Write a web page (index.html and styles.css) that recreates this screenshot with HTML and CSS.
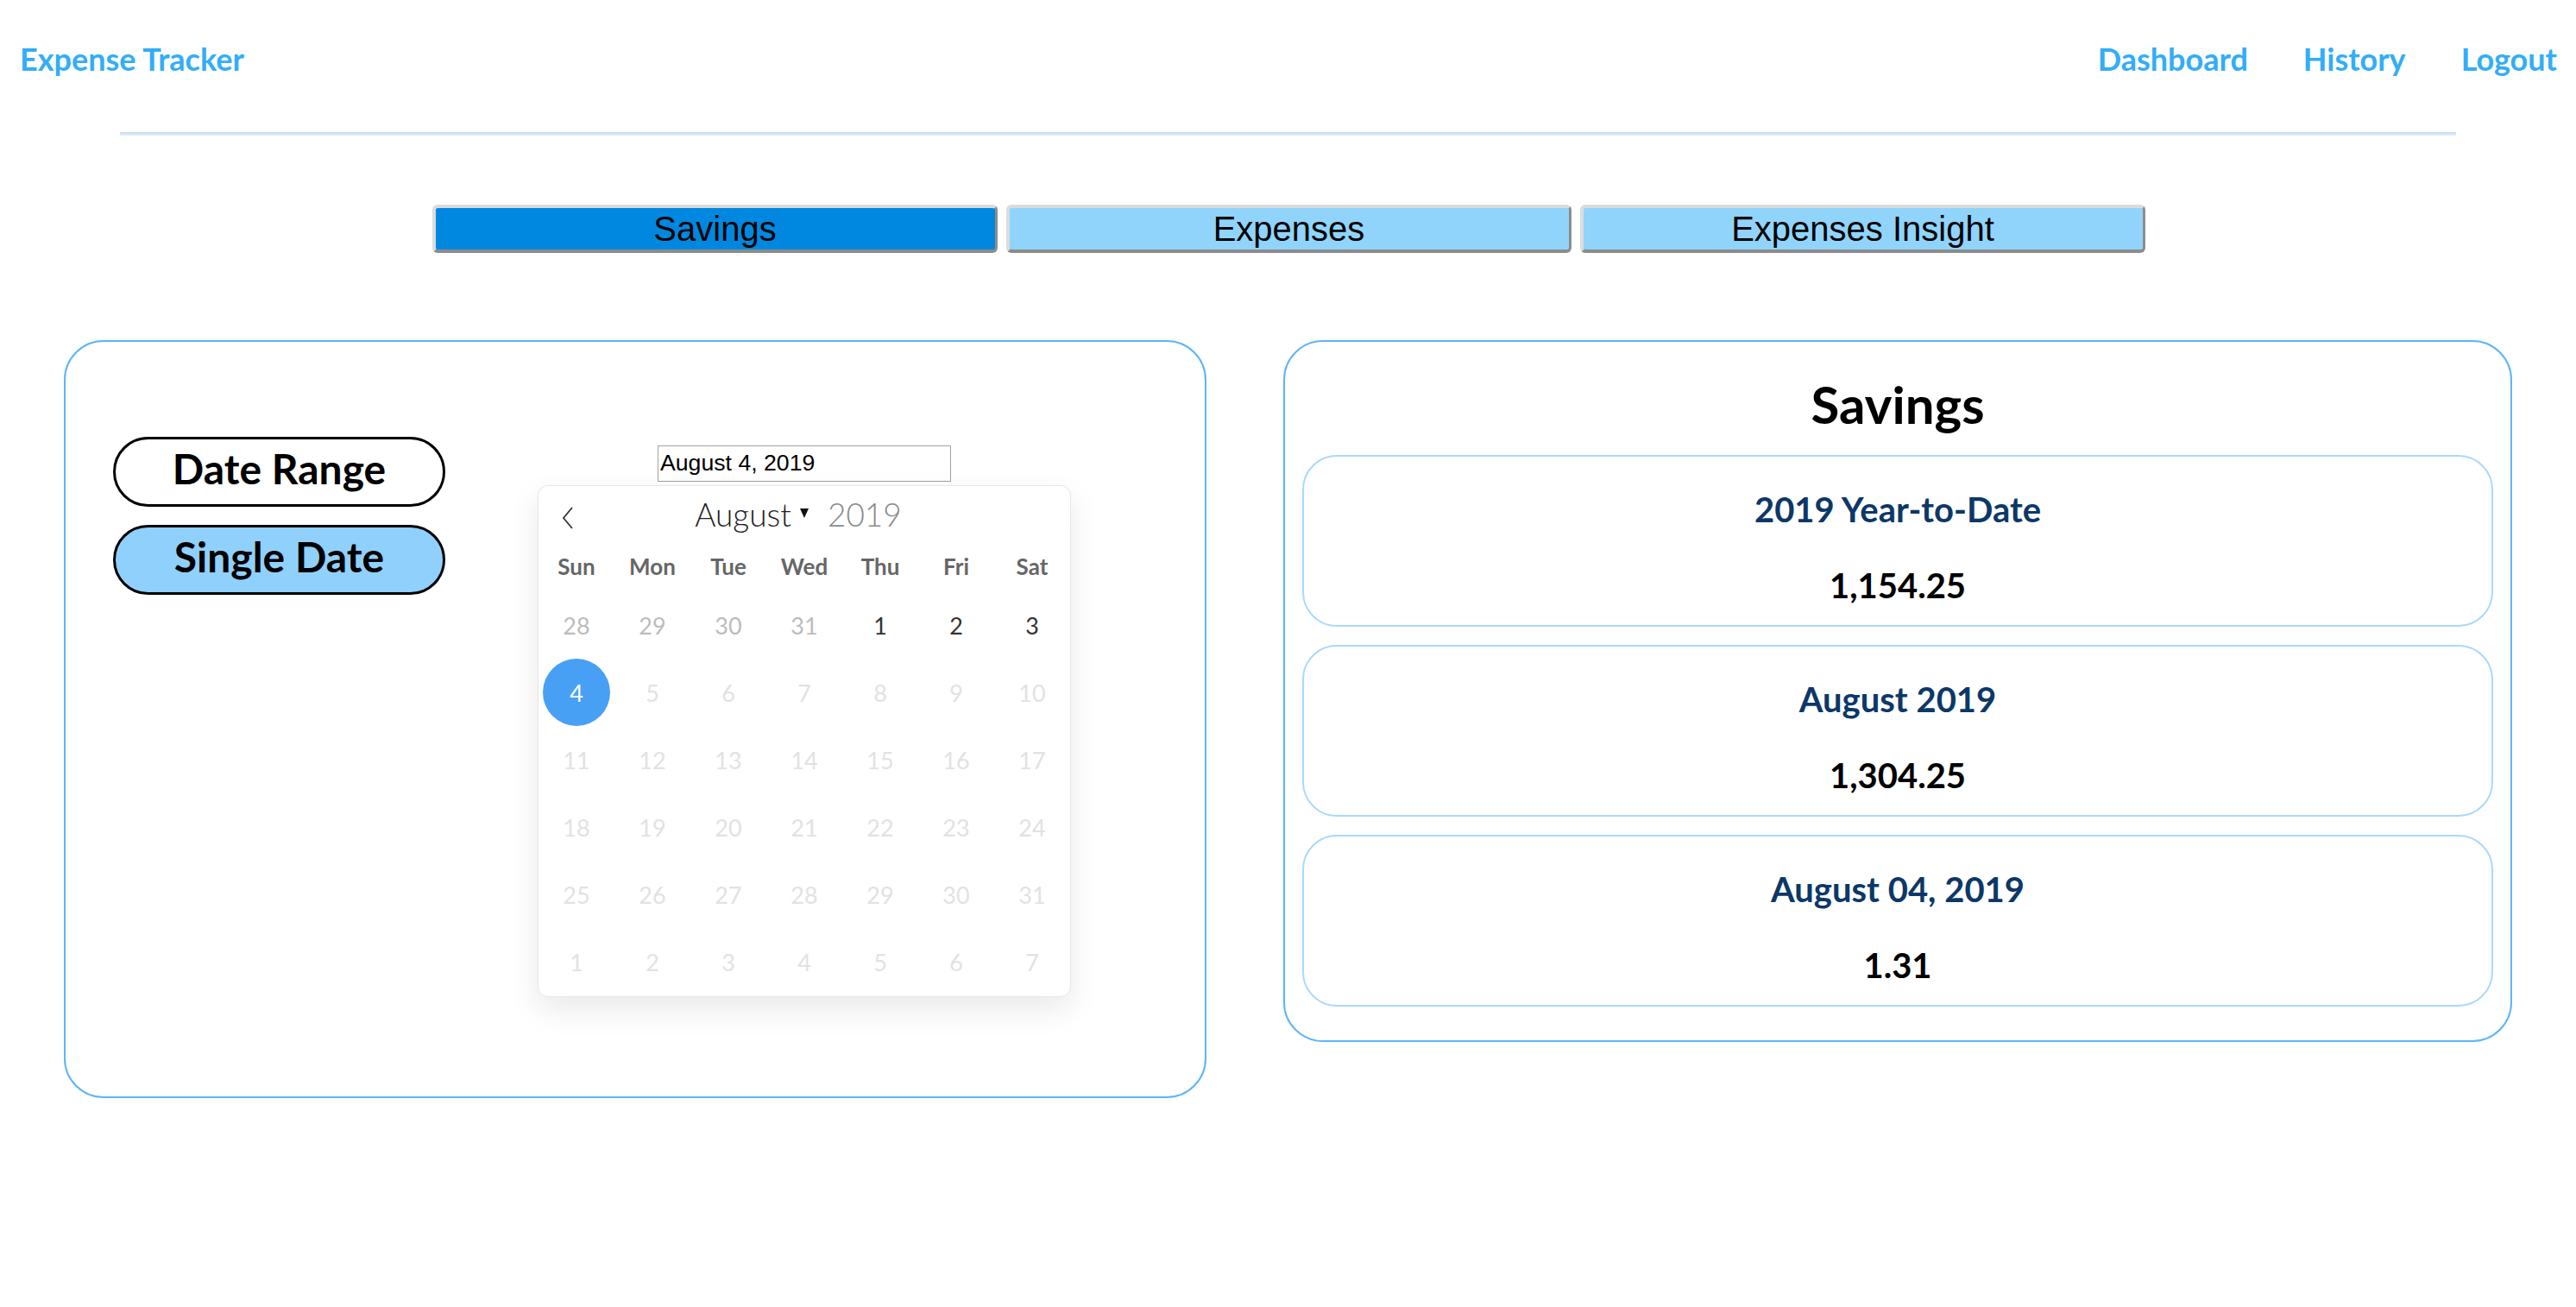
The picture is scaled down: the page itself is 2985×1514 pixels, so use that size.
FILE: index.html
```html
<!DOCTYPE html>
<html lang="en">
<head>
<meta charset="utf-8">
<title>Expense Tracker</title>
<link rel="stylesheet" href="styles.css">
</head>
<body>
<header class="topbar">
  <a class="brand" href="#">Expense Tracker</a>
  <nav class="nav">
    <a href="#">Dashboard</a>
    <a href="#">History</a>
    <a href="#">Logout</a>
  </nav>
</header>
<div class="divider"></div>

<div class="tabs">
  <button class="tab active">Savings</button>
  <button class="tab">Expenses</button>
  <button class="tab">Expenses Insight</button>
</div>

<main class="cards">
  <section class="card card-left">
    <div class="mode-buttons">
      <button class="pill">Date Range</button>
      <button class="pill selected">Single Date</button>
    </div>
    <div class="date-col">
      <input class="date-input" type="text" value="August 4, 2019">
      <div class="calendar">
        <div class="cal-head">
          <div class="cal-prev">
            <svg width="14" height="26" viewBox="0 0 14 26"><path d="M12 1 L2 13 L12 25" fill="none" stroke="#333" stroke-width="1.8"/></svg>
          </div>
          <div class="cal-title">
            <span class="cal-month">August</span><span class="caret"></span><span class="cal-year">2019</span>
          </div>
          <div class="cal-spacer"></div>
        </div>
        <div class="cal-weekdays">
          <span>Sun</span><span>Mon</span><span>Tue</span><span>Wed</span><span>Thu</span><span>Fri</span><span>Sat</span>
        </div>
        <div class="cal-days">
          <span class="d other">28</span><span class="d other">29</span><span class="d other">30</span><span class="d other">31</span><span class="d cur">1</span><span class="d cur">2</span><span class="d cur">3</span>
          <span class="d sel"><i>4</i></span><span class="d dis">5</span><span class="d dis">6</span><span class="d dis">7</span><span class="d dis">8</span><span class="d dis">9</span><span class="d dis">10</span>
          <span class="d dis">11</span><span class="d dis">12</span><span class="d dis">13</span><span class="d dis">14</span><span class="d dis">15</span><span class="d dis">16</span><span class="d dis">17</span>
          <span class="d dis">18</span><span class="d dis">19</span><span class="d dis">20</span><span class="d dis">21</span><span class="d dis">22</span><span class="d dis">23</span><span class="d dis">24</span>
          <span class="d dis">25</span><span class="d dis">26</span><span class="d dis">27</span><span class="d dis">28</span><span class="d dis">29</span><span class="d dis">30</span><span class="d dis">31</span>
          <span class="d dis">1</span><span class="d dis">2</span><span class="d dis">3</span><span class="d dis">4</span><span class="d dis">5</span><span class="d dis">6</span><span class="d dis">7</span>
        </div>
      </div>
    </div>
  </section>

  <section class="card card-right">
    <h2 class="summary-title">Savings</h2>
    <div class="stat">
      <h3 class="stat-label">2019 Year-to-Date</h3>
      <p class="stat-value">1,154.25</p>
    </div>
    <div class="stat">
      <h3 class="stat-label">August 2019</h3>
      <p class="stat-value">1,304.25</p>
    </div>
    <div class="stat">
      <h3 class="stat-label">August 04, 2019</h3>
      <p class="stat-value">1.31</p>
    </div>
  </section>
</main>
</body>
</html>
```
FILE: styles.css
```css
* { box-sizing: border-box; }

body {
  margin: 0;
  font-family: "Lato", "Noto Sans", sans-serif;
  background: #ffffff;
  color: #000;
}

/* top bar */
.topbar {
  display: flex;
  justify-content: space-between;
  align-items: center;
  padding: 47px 22px 0 23px;
}
.brand, .nav a {
  font-size: 36px;
  line-height: 43px;
  font-weight: 700;
  color: #33adf7;
  text-decoration: none;
}
.nav {
  display: flex;
  gap: 64px;
}
.divider {
  margin: 63px 139px 0 139px;
  border-top: 2px solid #cfdff0;
  border-bottom: 2px solid #ddebfa;
}

/* tabs */
.tabs {
  display: flex;
  justify-content: center;
  gap: 10px;
  margin-top: 80px;
  padding-left: 1px;
}
.tab {
  width: 655px;
  height: 56px;
  font-family: "Liberation Sans", Arial, sans-serif;
  font-size: 40px;
  color: #000;
  background: #90d4fc;
  border-style: solid;
  border-width: 4px 3px 4px 4px;
  border-color: #dcdcdc #8c8c8c #8c8c8c #dcdcdc;
  border-radius: 6px;
  padding: 0;
  line-height: 46px;
}
.tab.active {
  background: #0088e0;
}

/* cards */
.cards {
  display: flex;
  align-items: flex-start;
  gap: 89px;
  margin-top: 101px;
  padding: 0 74px;
}
.card {
  border: 2px solid #5db5f8;
  border-radius: 46px;
  background: #fff;
}
.card-left {
  width: 1324px;
  height: 878px;
  display: flex;
  align-items: flex-start;
  gap: 107px;
  padding: 110px 0 0 55px;
}
.mode-buttons {
  display: flex;
  flex-direction: column;
  gap: 21px;
}
.pill {
  width: 385px;
  height: 81px;
  border: 3px solid #000;
  border-radius: 41px;
  background: #fff;
  font-family: "Lato", sans-serif;
  font-weight: 700;
  font-size: 48px;
  color: #000;
  padding: 0 0 7px 0;
  line-height: 1;
}
.pill.selected {
  background: #90d0fc;
}

.date-col {
  display: flex;
  flex-direction: column;
  align-items: center;
  margin-top: 10px;
  width: 618px;
}
.date-input {
  width: 340px;
  height: 42px;
  border: 1px solid #a2a2a2;
  font-family: "Liberation Sans", Arial, sans-serif;
  font-size: 26.67px;
  padding: 0 2px 2px 2px;
  color: #000;
  background: #fff;
}

.calendar {
  margin-top: 4px;
  width: 618px;
  height: 593px;
  border: 1px solid #e6e6e6;
  border-radius: 12px;
  background: #fff;
  box-shadow: 0 14px 36px rgba(0, 0, 0, 0.09);
}
.cal-head {
  display: grid;
  grid-template-columns: 1fr auto 1fr;
  align-items: center;
  height: 72px;
}
.cal-prev {
  padding-left: 27px;
  display: flex;
  align-items: center;
  padding-top: 2px;
}
.cal-title {
  display: flex;
  align-items: baseline;
  margin: 0 14px 7px 0;
  font-weight: 300;
  font-size: 37px;
  line-height: 1;
}
.cal-month { color: #1e1e1e; }
.cal-year { color: #8a8a8a; margin-left: 22px; }
.caret {
  display: inline-block;
  width: 0;
  height: 0;
  margin-left: 10px;
  border-left: 5.5px solid transparent;
  border-right: 5.5px solid transparent;
  border-top: 11px solid #111;
  position: relative;
  top: -10px;
}
.cal-weekdays {
  display: grid;
  grid-template-columns: repeat(7, 88px);
  height: 42px;
  align-items: center;
  font-weight: 700;
  font-size: 26px;
  color: #666;
  text-align: center;
}
.cal-days {
  display: grid;
  grid-template-columns: repeat(7, 88px);
  grid-auto-rows: 78px;
  margin-top: 8px;
  font-size: 27px;
  text-align: center;
}
.d {
  display: flex;
  align-items: center;
  justify-content: center;
}
.d.other { color: #bcbcbc; }
.d.cur { color: #333; }
.d.dis { color: #e2e2e2; }
.d.sel i {
  font-style: normal;
  width: 78px;
  height: 78px;
  border-radius: 50%;
  background: #48a0f5;
  color: #fff;
  display: flex;
  align-items: center;
  justify-content: center;
}

/* right summary card */
.card-right {
  width: 1424px;
  padding: 36px 20px 39px 20px;
  display: flex;
  flex-direction: column;
  gap: 21px;
}
.summary-title {
  margin: 0 0 2px 0;
  text-align: center;
  font-size: 60px;
  line-height: 72px;
  font-weight: 700;
}
.stat {
  height: 199px;
  border: 2px solid #a9d9fb;
  border-radius: 40px;
  text-align: center;
  padding-top: 37px;
}
.stat-label {
  margin: 0;
  font-size: 40px;
  line-height: 48px;
  font-weight: 700;
  color: #0c3868;
}
.stat-value {
  margin: 40px 0 0 0;
  font-size: 40px;
  line-height: 48px;
  font-weight: 700;
  color: #000;
}
```
